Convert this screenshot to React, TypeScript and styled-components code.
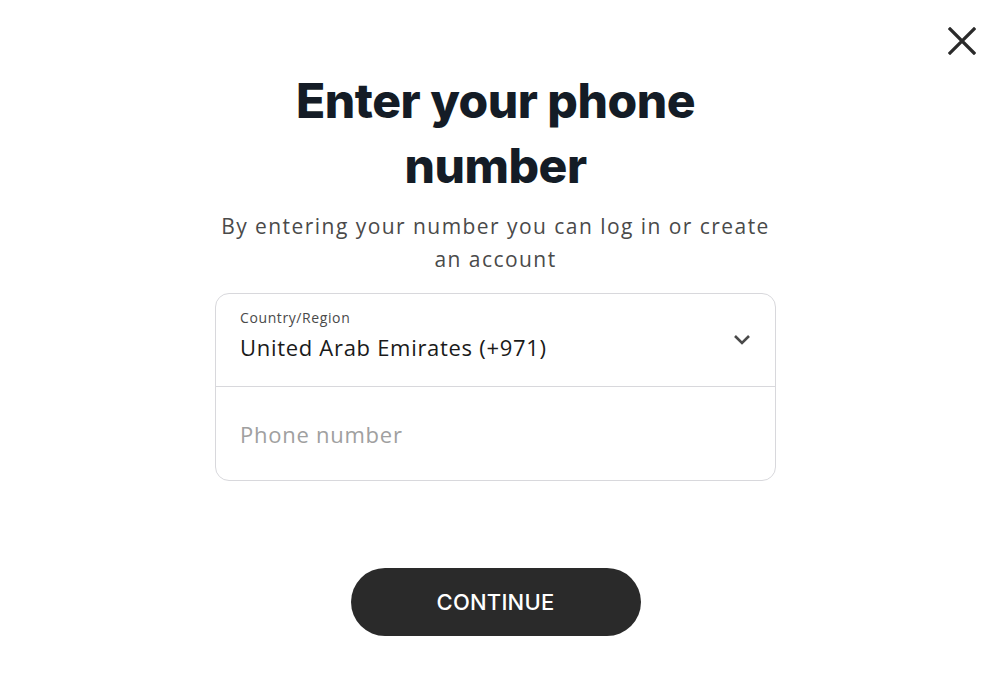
import React from "react";
import styled, { createGlobalStyle } from "styled-components";

const Global = createGlobalStyle`
  html, body { margin: 0; padding: 0; background: #fff; }
  body { font-family: "Inter", "Noto Sans", sans-serif; }
  * { box-sizing: border-box; }
`;

const Page = styled.div`
  position: relative;
  width: 1001px;
  height: 685px;
  padding-right: 10px;
  display: flex;
  flex-direction: column;
  align-items: center;
`;

const Close = styled.button`
  position: absolute;
  top: 26px;
  right: 24px;
  width: 30px;
  height: 30px;
  padding: 0;
  border: none;
  background: transparent;
  display: flex;
  align-items: center;
  justify-content: center;
  cursor: pointer;
`;

const Title = styled.h1`
  margin: 68px 0 0;
  width: 440px;
  text-align: center;
  font-family: "Inter", sans-serif;
  font-weight: 800;
  font-size: 48px;
  line-height: 65px;
  letter-spacing: -0.5px;
  color: #141c26;
`;

const Subtitle = styled.p`
  margin: 12px 0 0;
  width: 580px;
  text-align: center;
  font-family: "Open Sans", sans-serif;
  font-size: 21px;
  line-height: 33px;
  letter-spacing: 1.45px;
  color: #4a4a4a;
`;

const Card = styled.div`
  margin-top: 17px;
  width: 561px;
  border: 1px solid #d8d8dc;
  border-radius: 14px;
  overflow: hidden;
`;

const SelectRow = styled.div`
  height: 93px;
  border-bottom: 1px solid #d8d8dc;
  padding: 15px 24px 0;
  display: flex;
  align-items: flex-start;
  justify-content: space-between;
`;

const SelectText = styled.div`
  display: flex;
  flex-direction: column;
`;

const Label = styled.span`
  font-family: "Open Sans", sans-serif;
  font-size: 14px;
  line-height: 18px;
  letter-spacing: 0.6px;
  color: #4a4a4a;
`;

const Value = styled.span`
  margin-top: 6px;
  font-family: "Open Sans", sans-serif;
  font-size: 22px;
  line-height: 28px;
  letter-spacing: 0.7px;
  color: #1a1a1a;
`;

const Chevron = styled.span`
  margin-top: 25px;
  display: flex;
`;

const PhoneRow = styled.div`
  height: 93px;
  padding: 0 24px;
  display: flex;
  align-items: center;
`;

const PhoneInput = styled.input`
  width: 100%;
  border: none;
  outline: none;
  padding: 0;
  font-family: "Open Sans", sans-serif;
  font-size: 22px;
  letter-spacing: 0.75px;
  color: #1a1a1a;
  &::placeholder { color: #a0a0a0; }
`;

const Button = styled.button`
  margin-top: 87px;
  width: 290px;
  height: 68px;
  border: none;
  border-radius: 34px;
  background: #2a2a2a;
  color: #fff;
  font-family: "Inter", sans-serif;
  font-weight: 500;
  font-size: 22px;
  letter-spacing: 0.2px;
  cursor: pointer;
`;

export default function App() {
  return (
    <>
      <Global />
      <Page>
        <Close aria-label="Close">
          <svg width="28" height="28" viewBox="0 0 28 28">
            <path d="M2 2 L26 26 M26 2 L2 26" stroke="#2a2a2a" strokeWidth="3.2" strokeLinecap="square" />
          </svg>
        </Close>
        <Title>Enter your phone number</Title>
        <Subtitle>By entering your number you can log in or create an account</Subtitle>
        <Card>
          <SelectRow>
            <SelectText>
              <Label>Country/Region</Label>
              <Value>United Arab Emirates (+971)</Value>
            </SelectText>
            <Chevron>
              <svg width="18" height="12" viewBox="0 0 18 12">
                <path d="M2 2 L9 9 L16 2" stroke="#4a4a4a" strokeWidth="2.6" fill="none" />
              </svg>
            </Chevron>
          </SelectRow>
          <PhoneRow>
            <PhoneInput placeholder="Phone number" />
          </PhoneRow>
        </Card>
        <Button>CONTINUE</Button>
      </Page>
    </>
  );
}
